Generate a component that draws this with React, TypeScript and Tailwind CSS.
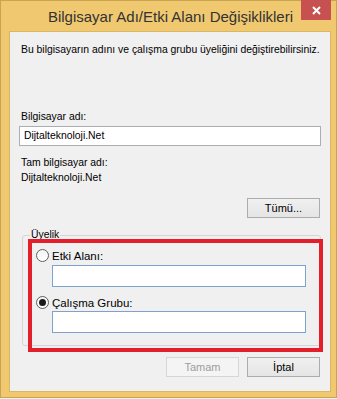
import React from 'react';

const font = { fontFamily: '"Liberation Sans", Arial, sans-serif' };

function Radio({ checked }: { checked?: boolean }) {
  return (
    <span className="flex h-[13px] w-[13px] items-center justify-center rounded-full border border-[#5e5e5e] bg-gradient-to-b from-[#f4f4f4] to-white">
      {checked && <span className="h-[7px] w-[7px] rounded-full bg-[#1b1b1b]" />}
    </span>
  );
}

function Button({ label, disabled }: { label: string; disabled?: boolean }) {
  return (
    <div
      className={`flex h-[20px] w-[73px] items-center justify-center border text-[11px] leading-[12px] ${
        disabled
          ? 'border-[#d6d6d6] bg-[#f4f4f4] text-[#9d9d9d]'
          : 'border-[#acacac] bg-gradient-to-b from-[#f0f0f0] to-[#e5e5e5] text-black'
      }`}
    >
      {label}
    </div>
  );
}

export default function App() {
  return (
    <div className="h-[399px] w-[337px] bg-[#f3f3f3]" style={font}>
      <div className="flex h-[398px] w-[337px] flex-col border border-[#c9a552] bg-[#efc86f]">
        <div className="relative flex h-[30px] items-center justify-center">
          <span className="pl-[4px] pt-[1px] text-[15px] leading-[16px] text-[#333]">
            Bilgisayar Adı/Etki Alanı Değişiklikleri
          </span>
          <div className="absolute -top-px right-[5px] flex h-[20px] w-[30px] items-center justify-center bg-[#c75050]">
            <svg width="9" height="9" viewBox="0 0 9 9">
              <path d="M1 1L8 8M8 1L1 8" stroke="white" strokeWidth="2" />
            </svg>
          </div>
        </div>

        <div className="ml-[8px] mr-[5px] flex h-[361px] flex-col border border-[#d9b764] bg-[#f0f0f0] text-[10.4px] leading-[12px] text-black">
          <p className="ml-[11px] mt-[12px]">Bu bilgisayarın adını ve çalışma grubu üyeliğini değiştirebilirsiniz.</p>

          <p className="ml-[11px] mt-[55px]">Bilgisayar adı:</p>
          <div className="ml-[9px] mt-[3px] flex h-[20px] w-[302px] items-center border border-[#abadb3] bg-white px-[4px]">
            Dijtalteknoloji.Net
          </div>

          <p className="ml-[11px] mt-[11px]">Tam bilgisayar adı:</p>
          <p className="ml-[11px] mt-[3px]">Dijtalteknoloji.Net</p>

          <div className="mr-[10px] mt-[14px] flex justify-end">
            <Button label="Tümü..." />
          </div>

          <div className="relative ml-[12px] mt-[17px] h-[111px] w-[299px] rounded-[3px] border border-[#d5d5d5]">
            <span className="absolute -top-[7px] left-[7px] bg-[#f0f0f0] px-[1px]">Üyelik</span>
            <div className="flex flex-col pl-[13px] text-[11.5px]">
              <div className="mt-[13px] flex items-center gap-[3px]">
                <Radio />
                <span>Etki Alanı:</span>
              </div>
              <div className="ml-[16px] mt-[3px] h-[22px] w-[254px] border border-[#7da2ce] bg-white" />
              <div className="mt-[9px] flex items-center gap-[3px]">
                <Radio checked />
                <span>Çalışma Grubu:</span>
              </div>
              <div className="ml-[16px] mt-[2px] h-[22px] w-[254px] border border-[#7da2ce] bg-white" />
            </div>
            <div className="pointer-events-none absolute left-[5px] top-[3px] h-[113px] w-[295px] border-[4px] border-[#e21f2b]" />
          </div>

          <div className="mr-[10px] mt-[11px] flex justify-end gap-[8px]">
            <Button label="Tamam" disabled />
            <Button label="İptal" />
          </div>
        </div>
      </div>
    </div>
  );
}
